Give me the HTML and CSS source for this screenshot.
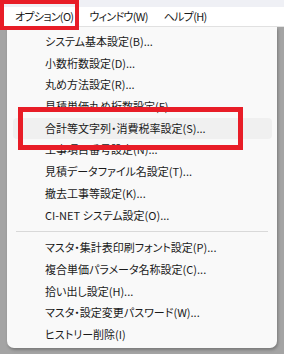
FILE: index.html
```html
<!DOCTYPE html>
<html lang="ja">
<head>
    <meta charset="UTF-8">
    <meta name="viewport" content="width=device-width, initial-scale=1.0">
    <title>オプション</title>
    <link rel="stylesheet" href="styles.css">
</head>
<body>
    <div class="screen">
        <div class="title-strip"></div>
        <div class="menubar">
            <span class="menubar-item">オプション(O)</span>
            <span class="menubar-item">ウィンドウ(W)</span>
            <span class="menubar-item">ヘルプ(H)</span>
        </div>
        <div class="workspace">
            <div class="popup">
                <div class="item">システム基本設定(B)...</div>
                <div class="item">小数桁数設定(D)...</div>
                <div class="item">丸め方法設定(R)...</div>
                <div class="item">見積単価丸め桁数設定(F)...</div>
                <div class="item hover">合計等文字列・消費税率設定(S)...</div>
                <div class="item">工事項目番号設定(N)...</div>
                <div class="item">見積データファイル名設定(T)...</div>
                <div class="item">撤去工事等設定(K)...</div>
                <div class="item">CI-NET システム設定(O)...</div>
                <div class="separator"></div>
                <div class="item">マスタ・集計表印刷フォント設定(P)...</div>
                <div class="item">複合単価パラメータ名称設定(C)...</div>
                <div class="item">拾い出し設定(H)...</div>
                <div class="item">マスタ・設定変更パスワード(W)...</div>
                <div class="item">ヒストリー削除(I)</div>
            </div>
        </div>
        <!-- annotation frames -->
        <div class="mark mark-menu"></div>
        <div class="mark mark-item"></div>
    </div>
</body>
</html>
```

FILE: styles.css
```css
body {
    margin: 0;
    font-family: "Noto Sans CJK JP", "Noto Sans", sans-serif;
    font-feature-settings: "palt";
    color: #1a1a1a;
}

.screen {
    position: relative;
    width: 284px;
    height: 354px;
    overflow: hidden;
    background-color: #a4a4a4;
}

.title-strip {
    height: 7px;
    background-color: #eff0f5;
}

.menubar {
    display: flex;
    height: 19px;
    align-items: center;
    background-color: #ffffff;
    border-bottom: 1px solid #e3e3e3;
    padding-left: 15px;
    gap: 16px;
    font-size: 11px;
    letter-spacing: -0.7px;
}

.menubar-item {
    line-height: 19px;
}

.workspace {
    display: flex;
    padding-left: 7px;
}

.popup {
    width: 259px;
    padding: 4px 5px 2px 6px;
    background-color: #f9f9f9;
    border-radius: 0 0 7px 7px;
    box-shadow: 1px 2px 3px rgba(0, 0, 0, 0.25);
    font-size: 11px;
}

.item {
    height: 21.7px;
    line-height: 21.7px;
    padding-left: 32px;
    border-radius: 4px;
    white-space: nowrap;
}

.item.hover {
    background-color: #f0f0f0;
}

.separator {
    height: 11px;
    margin: 0 4px 0 3px;
    display: flex;
    align-items: center;
}

.separator::after {
    content: "";
    flex: 1;
    height: 1px;
    background-color: #d9d9d9;
}

.mark {
    position: absolute;
    border: 4px solid #e81d27;
    box-sizing: border-box;
}

.mark-menu {
    left: 0;
    top: 0;
    width: 79px;
    height: 30px;
}

.mark-item {
    left: 18px;
    top: 107px;
    width: 225px;
    height: 43px;
    border-width: 5px;
}
```
